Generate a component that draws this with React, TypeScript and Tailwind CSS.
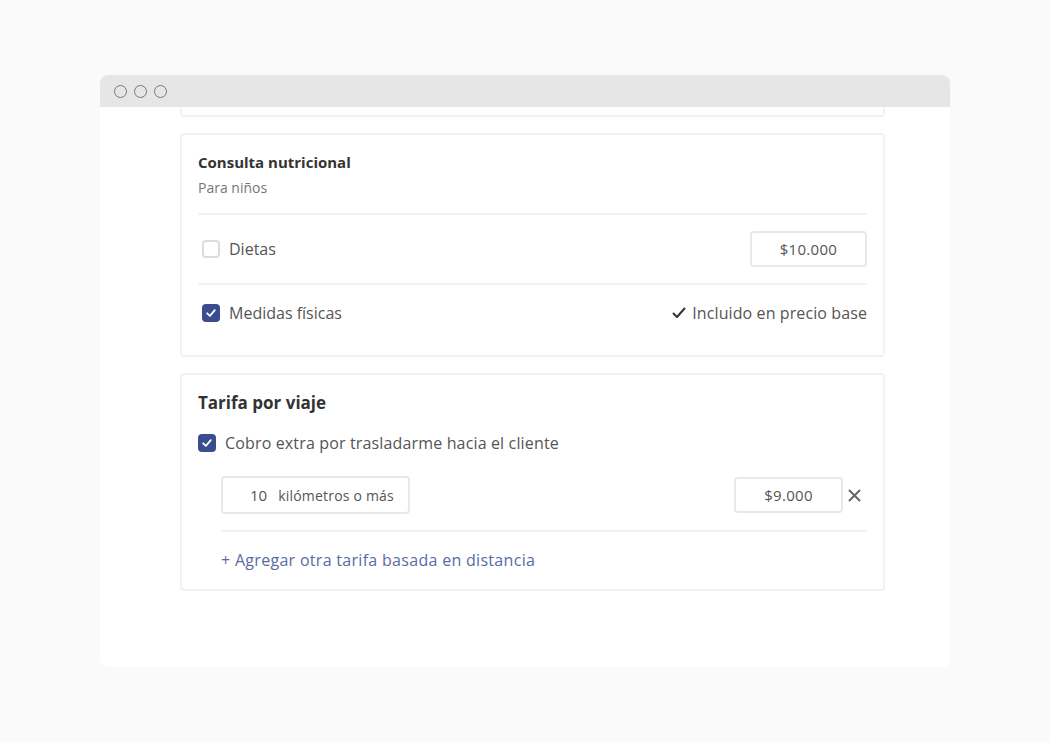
import React from "react";

function CheckBox({ checked }: { checked: boolean }) {
  if (checked) {
    return (
      <div className="w-[18px] h-[18px] rounded-[4px] bg-[#3a4d8f] flex items-center justify-center shrink-0">
        <svg width="12" height="12" viewBox="0 0 12 12" fill="none">
          <path d="M2.2 6.3 L4.9 8.9 L9.8 3.2" stroke="white" strokeWidth="1.8" strokeLinecap="round" strokeLinejoin="round" />
        </svg>
      </div>
    );
  }
  return <div className="w-[18px] h-[18px] rounded-[4px] border-2 border-[#dcdcdc] bg-white shrink-0" />;
}

export default function App() {
  return (
    <div
      className="min-h-[742px] bg-[#fafafa] pt-[75px] pl-[100px]"
      style={{ fontFamily: '"Open Sans", "Noto Sans", sans-serif' }}
    >
      <div className="w-[850px] h-[592px] flex flex-col rounded-[8px] overflow-hidden bg-white">
        <div className="h-[32px] bg-[#e6e6e6] flex items-center gap-[7px] pl-[14px] shrink-0">
          <div className="w-[13px] h-[13px] rounded-full border-[1.5px] border-[#777]" />
          <div className="w-[13px] h-[13px] rounded-full border-[1.5px] border-[#777]" />
          <div className="w-[13px] h-[13px] rounded-full border-[1.5px] border-[#777]" />
        </div>
        <div className="flex flex-col pl-[80px] w-[785px]">
          <div className="h-[10px] border-x-2 border-b-2 border-[#f2f2f2] rounded-b-[4px]" />

          {/* Card 1 */}
          <div className="mt-[16px] border-2 border-[#f2f2f2] rounded-[4px] px-[16px] pt-[17px] pb-[24px]">
            <div className="text-[15px] leading-[20px] font-bold text-[#333]">Consulta nutricional</div>
            <div className="mt-[7px] text-[14px] leading-[18px] text-[#777]">Para niños</div>
            <div className="mt-[16px] h-[2px] bg-[#f2f2f2]" />
            <div className="flex items-center justify-between py-[16px]">
              <div className="flex items-center gap-[9px] pl-[4px]">
                <CheckBox checked={false} />
                <span className="text-[16px] text-[#555]">Dietas</span>
              </div>
              <div className="w-[117px] h-[36px] border-2 border-[#e8e8e8] rounded-[4px] flex items-center justify-center text-[15px] text-[#555] tracking-[0.3px]">
                $10.000
              </div>
            </div>
            <div className="h-[2px] bg-[#f2f2f2]" />
            <div className="flex items-center justify-between pt-[10px] h-[46px]">
              <div className="flex items-center gap-[9px] pl-[4px]">
                <CheckBox checked={true} />
                <span className="text-[16px] text-[#555]">Medidas físicas</span>
              </div>
              <div className="flex items-center gap-[6px] text-[16px] text-[#555] tracking-[0.1px]">
                <svg width="14" height="14" viewBox="0 0 14 14" fill="none">
                  <path d="M1.5 7.5 L5 11 L12.5 2.5" stroke="#333" strokeWidth="2" strokeLinecap="round" strokeLinejoin="round" />
                </svg>
                <span>Incluido en precio base</span>
              </div>
            </div>
          </div>

          {/* Card 2 */}
          <div className="mt-[16px] border-2 border-[#f2f2f2] rounded-[4px] px-[16px] pt-[16px] pb-[18px]">
            <div className="text-[17px] leading-[24px] font-bold text-[#333]">Tarifa por viaje</div>
            <div className="mt-[16px] flex items-center gap-[9px] h-[24px]">
              <CheckBox checked={true} />
              <span className="text-[16px] text-[#555] tracking-[0.15px]">Cobro extra por trasladarme hacia el cliente</span>
            </div>
            <div className="ml-[23px] mt-[21px]">
              <div className="flex items-center justify-between">
                <div className="w-[189px] h-[38px] border-2 border-[#e8e8e8] rounded-[4px] flex items-center pl-[27px] gap-[11px]">
                  <span className="text-[15px] text-[#555]">10</span>
                  <span className="text-[14px] text-[#555] tracking-[0.2px]">kilómetros o más</span>
                </div>
                <div className="flex items-center gap-[5px] pr-[6px]">
                  <div className="w-[109px] h-[36px] border-2 border-[#e8e8e8] rounded-[4px] flex items-center justify-center text-[15px] text-[#555] tracking-[0.3px]">
                    $9.000
                  </div>
                  <svg width="13" height="13" viewBox="0 0 13 13" fill="none">
                    <path d="M1.5 1.5 L11.5 11.5 M11.5 1.5 L1.5 11.5" stroke="#666" strokeWidth="2" strokeLinecap="round" />
                  </svg>
                </div>
              </div>
              <div className="mt-[16px] h-[2px] bg-[#f2f2f2]" />
              <div className="mt-[17px] text-[16px] leading-[22px] text-[#5b6aa6] tracking-[0.3px]">+ Agregar otra tarifa basada en distancia</div>
            </div>
          </div>
        </div>
      </div>
    </div>
  );
}
